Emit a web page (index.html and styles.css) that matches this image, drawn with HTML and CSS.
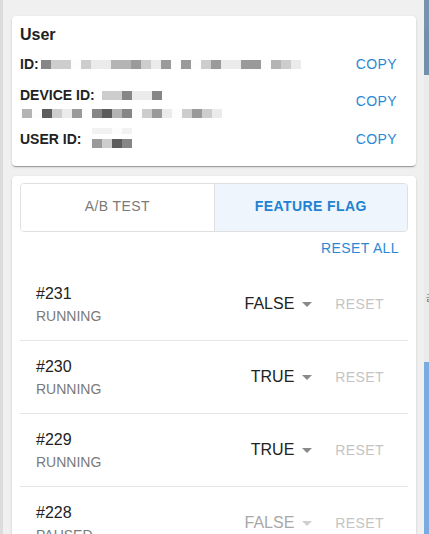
FILE: index.html
```html
<!DOCTYPE html>
<html lang="en">
<head>
<meta charset="utf-8">
<title>Debug panel</title>
<link rel="stylesheet" href="styles.css">
</head>
<body>
<div class="page">
  <main class="panel">
    <section class="card user-card">
      <h2 class="card-title">User</h2>
      <div class="info-row id-row">
        <div class="info">
          <span class="label">ID:</span>
          <span class="mosaic id-mosaic">
            <i class="c c5"></i><i class="c c2"></i><i class="c c2"></i><i class="c c0"></i><i class="c c2"></i><i class="c c1"></i><i class="c c1"></i><i class="c c3"></i><i class="c c3"></i><i class="c c4"></i><i class="c c2"></i><i class="c c1"></i><i class="c c4"></i><i class="c c0"></i><i class="c c4"></i><i class="c c0"></i><i class="c c2"></i><i class="c c4"></i><i class="c c1"></i><i class="c c1"></i><i class="c c4"></i><i class="c c4"></i><i class="c c0"></i><i class="c c3"></i><i class="c c2"></i><i class="c c1"></i>
          </span>
        </div>
        <button class="text-btn">COPY</button>
      </div>
      <div class="info-row device-row">
        <div class="info stacked">
          <div class="line">
            <span class="label">DEVICE ID:</span>
            <span class="mosaic device-mosaic-1">
              <i class="c c2"></i><i class="c c2"></i><i class="c c5"></i><i class="c c1"></i><i class="c c1"></i><i class="c c5"></i>
            </span>
          </div>
          <span class="mosaic device-mosaic-2">
            <i class="c c3"></i><i class="c c0"></i><i class="c c6"></i><i class="c c2"></i><i class="c c1"></i><i class="c c4"></i><i class="c c0"></i><i class="c c5"></i><i class="c c6"></i><i class="c c3"></i><i class="c c5"></i><i class="c c0"></i><i class="c c2"></i><i class="c c4"></i><i class="c c1"></i><i class="c c0"></i><i class="c c2"></i><i class="c c4"></i><i class="c c2"></i><i class="c c1"></i>
          </span>
        </div>
        <button class="text-btn">COPY</button>
      </div>
      <div class="info-row user-row">
        <div class="info">
          <span class="label">USER ID:</span>
          <span class="mosaic-stack">
            <span class="mosaic faint-mosaic"><i class="c c1"></i><i class="c c1"></i><i class="c c0"></i><i class="c c1"></i></span>
            <span class="mosaic"><i class="c c4"></i><i class="c c2"></i><i class="c c6"></i><i class="c c5"></i></span>
          </span>
        </div>
        <button class="text-btn">COPY</button>
      </div>
    </section>

    <section class="card flags-card">
      <div class="tabs">
        <button class="tab">A/B TEST</button>
        <button class="tab tab-active">FEATURE FLAG</button>
      </div>
      <div class="reset-all-row">
        <button class="text-btn">RESET ALL</button>
      </div>
      <ul class="flag-list">
        <li class="flag-row">
          <div class="flag-text">
            <span class="flag-id">#231</span>
            <span class="flag-status">RUNNING</span>
          </div>
          <div class="flag-actions">
            <div class="select">
              <span class="select-value">FALSE</span>
              <svg class="select-arrow" viewBox="0 0 24 24" width="24" height="24"><path d="M7 10l5 5 5-5z"/></svg>
            </div>
            <button class="text-btn disabled">RESET</button>
          </div>
        </li>
        <li class="flag-row">
          <div class="flag-text">
            <span class="flag-id">#230</span>
            <span class="flag-status">RUNNING</span>
          </div>
          <div class="flag-actions">
            <div class="select">
              <span class="select-value">TRUE</span>
              <svg class="select-arrow" viewBox="0 0 24 24" width="24" height="24"><path d="M7 10l5 5 5-5z"/></svg>
            </div>
            <button class="text-btn disabled">RESET</button>
          </div>
        </li>
        <li class="flag-row">
          <div class="flag-text">
            <span class="flag-id">#229</span>
            <span class="flag-status">RUNNING</span>
          </div>
          <div class="flag-actions">
            <div class="select">
              <span class="select-value">TRUE</span>
              <svg class="select-arrow" viewBox="0 0 24 24" width="24" height="24"><path d="M7 10l5 5 5-5z"/></svg>
            </div>
            <button class="text-btn disabled">RESET</button>
          </div>
        </li>
        <li class="flag-row">
          <div class="flag-text">
            <span class="flag-id">#228</span>
            <span class="flag-status">PAUSED</span>
          </div>
          <div class="flag-actions">
            <div class="select select-disabled">
              <span class="select-value">FALSE</span>
              <svg class="select-arrow" viewBox="0 0 24 24" width="24" height="24"><path d="M7 10l5 5 5-5z"/></svg>
            </div>
            <button class="text-btn disabled">RESET</button>
          </div>
        </li>
      </ul>
    </section>
  </main>
  <aside class="bg-strip">
    <div class="strip-top"></div>
    <div class="strip-mid"><span class="strip-glyph">금</span></div>
    <div class="strip-bottom"></div>
  </aside>
</div>
</body>
</html>
```

FILE: styles.css
```css
* { box-sizing: border-box; }

html, body {
  margin: 0;
  padding: 0;
  height: 534px;
  overflow: hidden;
}

body {
  font-family: "Liberation Sans", Arial, sans-serif;
  color: #222;
  background: #f0f0f0;
}

.page {
  display: flex;
  height: 534px;
}

.panel {
  width: 424px;
  flex: none;
  border-left: 3px solid #dcdcdc;
  padding: 16px 8px 0 9px;
  display: flex;
  flex-direction: column;
  gap: 10px;
  background: #f0f0f0;
}

.card {
  background: #fff;
  border-radius: 4px;
  box-shadow: 0 2px 1px -1px rgba(0,0,0,0.2), 0 1px 1px 0 rgba(0,0,0,0.14), 0 1px 3px 0 rgba(0,0,0,0.12);
}

/* ---------- user card ---------- */
.user-card {
  padding: 9px 11px 9px 8px;
  height: 150px;
}

.card-title {
  margin: 0;
  font-size: 16px;
  font-weight: bold;
  line-height: 20px;
  color: #222;
}

.info-row {
  display: flex;
  justify-content: space-between;
  align-items: center;
}

.id-row {
  height: 36px;
  margin-top: 1px;
}

.device-row {
  height: 39px;
  align-items: flex-start;
}

.device-row .text-btn {
  margin-top: 1px;
}

.user-row {
  height: 36px;
}

.info {
  display: flex;
  align-items: center;
}

.info.stacked {
  flex-direction: column;
  align-items: flex-start;
  padding-top: 3px;
}

.line {
  display: flex;
  align-items: center;
  height: 20px;
}

.label {
  font-size: 14px;
  font-weight: bold;
  line-height: 20px;
  color: #222;
}

.mosaic {
  display: flex;
  height: 9px;
}

.id-mosaic { margin-left: 2px; }
.device-mosaic-1 { margin-left: 7px; }
.device-mosaic-2 { margin-left: 2px; margin-top: 4px; }

.mosaic-stack {
  display: flex;
  flex-direction: column;
  gap: 5px;
  margin-left: 11px;
  margin-top: -2px;
}

.faint-mosaic { height: 6px; opacity: 0.6; }

.c {
  display: block;
  width: 10px;
  height: 100%;
}
.c0 { background: #fdfdfd; }
.c1 { background: #ebebeb; }
.c2 { background: #cdcdcd; }
.c3 { background: #b4b4b4; }
.c4 { background: #9a9a9a; }
.c5 { background: #868686; }
.c6 { background: #5c5c5c; }

.text-btn {
  font-family: "Liberation Sans", Arial, sans-serif;
  font-size: 14px;
  letter-spacing: 0.4px;
  line-height: 20px;
  color: #2a89d4;
  background: none;
  border: 0;
  padding: 8px 8px;
  cursor: pointer;
}

.text-btn.disabled {
  color: #c4c4c4;
}

/* ---------- flags card ---------- */
.flags-card {
  flex: 1;
  padding: 7px 8px 0 8px;
}

.tabs {
  display: flex;
  height: 49px;
  border: 1px solid #e0e0e0;
  border-radius: 4px;
  overflow: hidden;
}

.tab {
  flex: 1;
  font-family: "Liberation Sans", Arial, sans-serif;
  font-size: 14px;
  letter-spacing: 0.4px;
  color: #7a7a7a;
  background: #fff;
  border: 0;
  padding: 0 0 3px 0;
}

.tab + .tab {
  border-left: 1px solid #e0e0e0;
}

.tab-active {
  background: #eef5fc;
  color: #1f82d2;
  font-weight: bold;
}

.reset-all-row {
  display: flex;
  justify-content: flex-end;
  height: 32px;
  align-items: center;
  margin-bottom: 4px;
}

.reset-all-row .text-btn {
  padding: 6px 9px 6px 8px;
}

.flag-list {
  list-style: none;
  margin: 0;
  padding: 0;
}

.flag-row {
  display: flex;
  justify-content: space-between;
  align-items: center;
  padding: 14px 16px;
  border-bottom: 1px solid #e6e6e6;
}

.flag-text {
  display: flex;
  flex-direction: column;
}

.flag-id {
  font-size: 16px;
  line-height: 24px;
  color: #222;
}

.flag-status {
  font-size: 14px;
  line-height: 20px;
  color: #7a7a7a;
}

.flag-actions {
  display: flex;
  align-items: center;
  gap: 8px;
}

.select {
  display: flex;
  align-items: center;
}

.select-value {
  font-size: 16px;
  line-height: 24px;
  color: #222;
}

.select-arrow {
  display: block;
  margin-left: 1px;
  fill: #8a8a8a;
}

.select-disabled .select-value { color: #a8a8a8; }
.select-disabled .select-arrow { fill: #cfcfcf; }

/* ---------- background strip ---------- */
.bg-strip {
  flex: 1;
  display: flex;
  flex-direction: column;
  overflow: hidden;
}

.strip-top {
  height: 75px;
  background: #7290aa;
  border-top: 29px solid #7593ad;
  box-shadow: inset 0 -46px 0 #7290aa;
}

.strip-mid {
  height: 287px;
  background: #ebebeb;
  padding-top: 218px;
}

.strip-glyph {
  display: block;
  font-family: "Noto Sans CJK KR", sans-serif;
  font-size: 8px;
  line-height: 10px;
  color: #555;
  margin-left: 2px;
}

.strip-bottom {
  flex: 1;
  background: #7bacdf;
}
```
